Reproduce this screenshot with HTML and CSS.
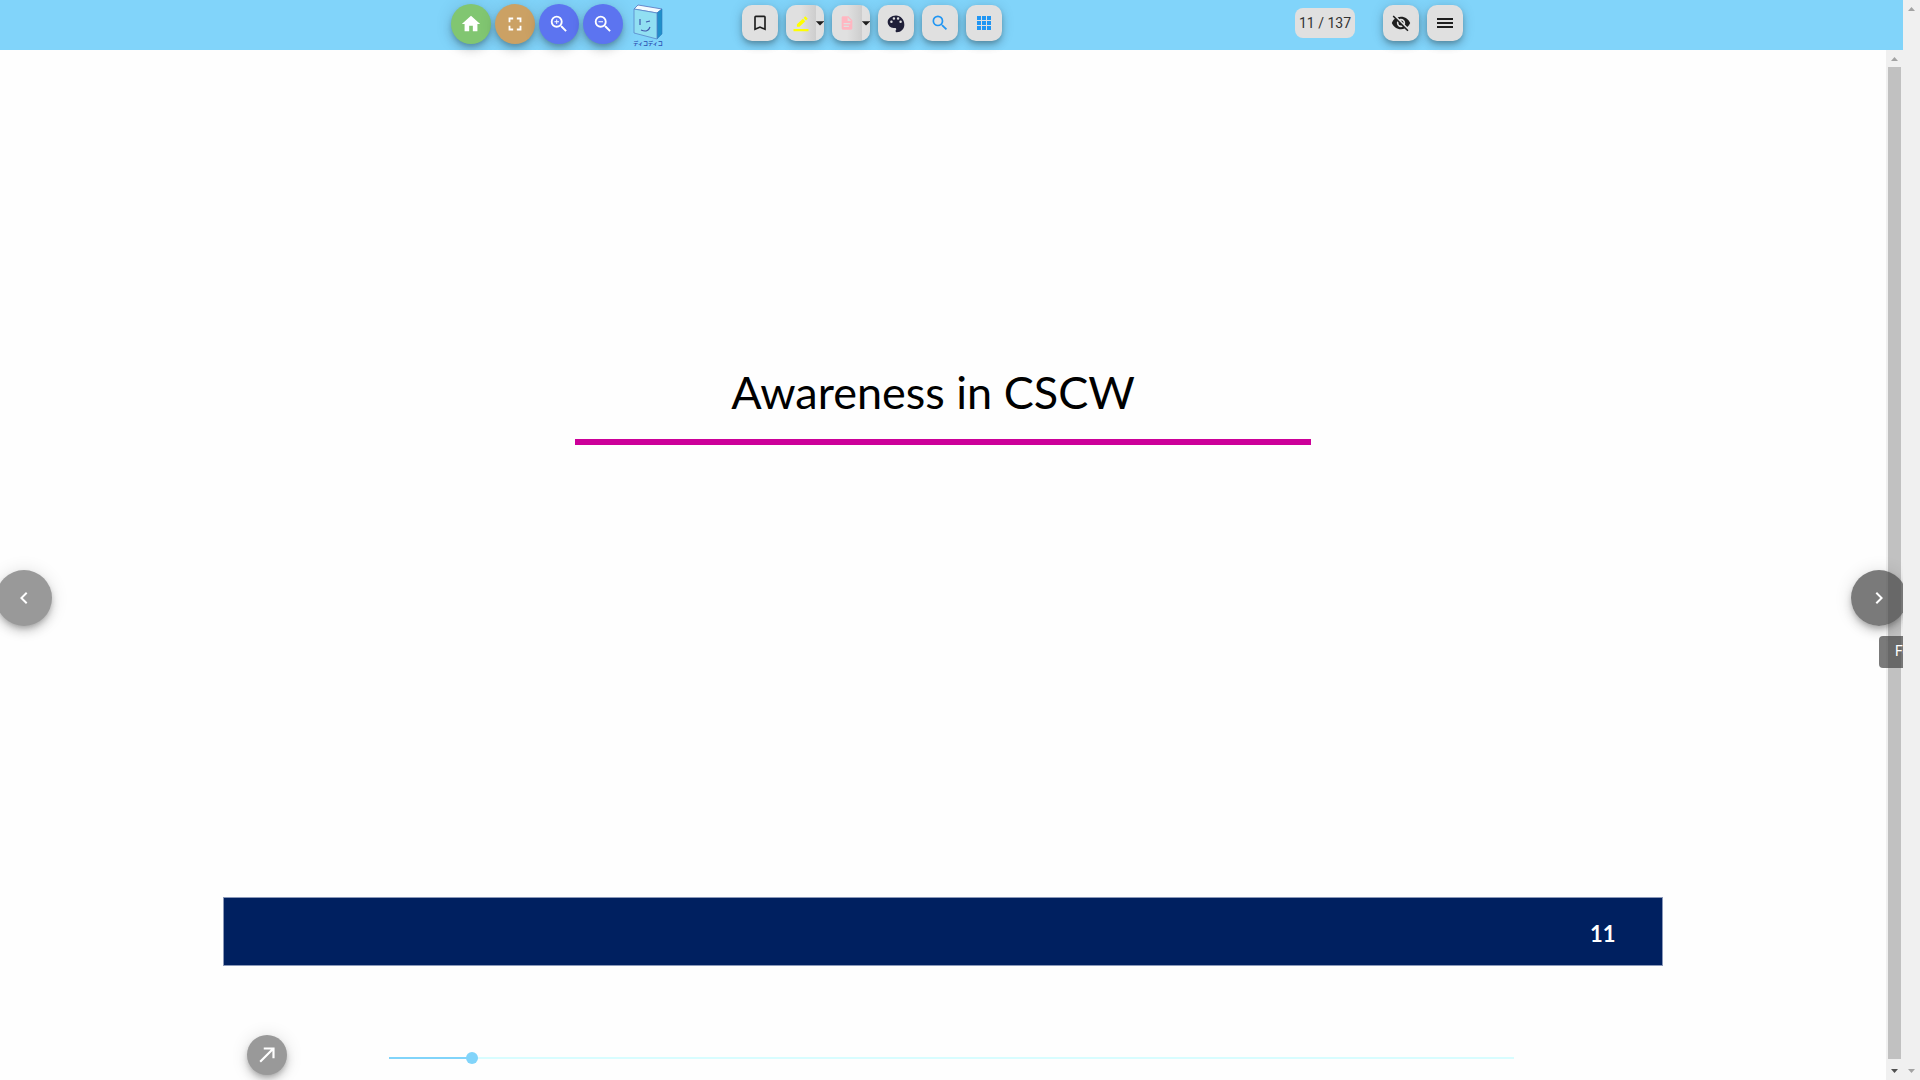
FILE: index.html
```html
<!DOCTYPE html>
<html lang="en">
<head>
<meta charset="utf-8">
<title>Awareness in CSCW</title>
<link rel="stylesheet" href="styles.css">
</head>
<body>
<div class="app">
  <header class="toolbar">
    <nav class="group nav-group">
      <button class="round green" aria-label="Home"><svg viewBox="0 0 24 24"><path d="M10 20v-6h4v6h5v-8h3L12 3 2 12h3v8z"/></svg></button>
      <button class="round tan" aria-label="Full screen"><svg viewBox="0 0 24 24"><path d="M5 5h5v2H7v3H5V5m9 0h5v5h-2V7h-3V5m3 9h2v5h-5v-2h3v-3m-7 3v2H5v-5h2v3h3z"/></svg></button>
      <button class="round indigo" aria-label="Zoom in"><svg viewBox="0 0 24 24"><path d="M15.5 14h-.79l-.28-.27A6.47 6.47 0 0 0 16 9.5 6.5 6.5 0 1 0 9.5 16c1.61 0 3.09-.59 4.23-1.57l.27.28v.79l5 4.99L20.49 19l-4.99-5m-6 0C7.01 14 5 11.99 5 9.5S7.01 5 9.5 5 14 7.01 14 9.5 11.99 14 9.5 14m.5-7H9v2H7v1h2v2h1v-2h2V9h-2V7z"/></svg></button>
      <button class="round indigo" aria-label="Zoom out"><svg viewBox="0 0 24 24"><path d="M15.5 14h-.79l-.28-.27A6.47 6.47 0 0 0 16 9.5 6.5 6.5 0 1 0 9.5 16c1.61 0 3.09-.59 4.23-1.57l.27.28v.79l5 4.99L20.49 19l-4.99-5m-6 0C7.01 14 5 11.99 5 9.5S7.01 5 9.5 5 14 7.01 14 9.5 11.99 14 9.5 14M7 9h5v1H7z"/></svg></button>
      <a class="logo" href="#">
        <svg class="logo-book" viewBox="0 0 32 36">
          <path d="M6 1 30 5 25 9 2 5z" fill="#f4fbff" stroke="#5570bd" stroke-width=".8"/>
          <path d="M25 9 30 5V30L25 35z" fill="#208fc9" stroke="#317bbd" stroke-width=".6"/>
          <path d="M2 5 25 9V35L2 29z" fill="#91dff2" stroke="#5987c9" stroke-width=".8"/>
          <path d="M8 15v6M14 18l4-1M9 26q7 3 9-3" fill="none" stroke="#4059ac" stroke-width="1.2"/>
        </svg>
        <span class="logo-name" lang="ja">ディコディコ</span>
      </a>
    </nav>
    <div class="group tool-group">
      <button class="tile" aria-label="Bookmark"><svg viewBox="0 0 24 24"><path d="M17 18l-5-2.180L7 18V5h10m0-2H7a2 2 0 0 0-2 2v16l7-3 7 3V5a2 2 0 0 0-2-2z"/></svg></button>
      <div class="split yellow">
        <button class="split-main" aria-label="Marker"><svg viewBox="0 0 24 24"><path d="M17.750 3 21 6.250 18.700 8.550 15.450 5.300zM14.400 6.300 17.700 9.600 10 17H6.500v-3.500zM2 20h20v3H2z"/></svg></button>
        <button class="split-more" aria-label="Marker options"><svg viewBox="0 0 24 24"><path d="M7 10l5 5 5-5z"/></svg></button>
      </div>
      <div class="split pink">
        <button class="split-main" aria-label="Note"><svg viewBox="0 0 24 24"><path d="M13 9h5.500L13 3.500V9M6 2h8l6 6v12a2 2 0 0 1-2 2H6a2 2 0 0 1-2-2V4c0-1.110.89-2 2-2m9 16v-2H7v2h8m2-4v-2H7v2h10z"/></svg></button>
        <button class="split-more" aria-label="Note options"><svg viewBox="0 0 24 24"><path d="M7 10l5 5 5-5z"/></svg></button>
      </div>
      <button class="tile palette" aria-label="Colours"><svg viewBox="0 0 24 24"><path d="M17.500 12a1.500 1.500 0 0 1 0-3 1.500 1.500 0 0 1 0 3m-3-4a1.500 1.500 0 0 1 0-3 1.500 1.500 0 0 1 0 3m-5 0a1.500 1.500 0 0 1 0-3 1.500 1.500 0 0 1 0 3m-3 4a1.500 1.500 0 0 1 0-3 1.500 1.500 0 0 1 0 3M12 3C6.500 3 2 6.580 2 11a7 7 0 0 0 7 7h1.800c.8 0 1.500.7 1.500 1.500 0 .4-.2.700-.4 1-.2.200-.4.600-.4 1 0 .8.700 1.500 1.500 1.500 5 0 9-4 9-9 0-6-4.500-11-10-11z"/></svg></button>
      <button class="tile blue" aria-label="Search"><svg viewBox="0 0 24 24"><path d="M9.500 3A6.500 6.500 0 0 1 16 9.500c0 1.610-.59 3.090-1.560 4.230l.27.270h.79l5 5-1.500 1.500-5-5v-.79l-.27-.27A6.516 6.516 0 0 1 9.500 16a6.500 6.500 0 0 1 0-13m0 2C7 5 5 7 5 9.500S7 14 9.500 14 14 12 14 9.500 12 5 9.500 5z"/></svg></button>
      <button class="tile blue" aria-label="Thumbnails"><svg viewBox="0 0 20 20"><path d="M3 3h4v4H3zM8 3h4v4H8zM13 3h4v4h-4zM3 8h4v4H3zM8 8h4v4H8zM13 8h4v4h-4zM3 13h4v4H3zM8 13h4v4H8zM13 13h4v4h-4z"/></svg></button>
    </div>
    <div class="group page-group">
      <span class="counter">11 / 137</span>
      <button class="tile" aria-label="Hide"><svg viewBox="0 0 24 24"><path d="M11.830 9 15 12.160V12a3 3 0 0 0-3-3h-.17m-4.300.8 1.550 1.550c-.05.210-.08.420-.08.650a3 3 0 0 0 3 3c.22 0 .44-.03.650-.08l1.550 1.550c-.67.330-1.410.530-2.200.530a5 5 0 0 1-5-5c0-.79.200-1.530.530-2.200M2 4.270l2.280 2.280.45.450C3.080 8.300 1.780 10 1 12c1.730 4.390 6 7.500 11 7.500 1.550 0 3.030-.3 4.380-.84l.43.420L19.730 22 21 20.730 3.270 3M12 7a5 5 0 0 1 5 5c0 .64-.13 1.260-.36 1.820l2.930 2.930c1.500-1.250 2.700-2.890 3.430-4.750-1.730-4.390-6-7.500-11-7.500-1.400 0-2.740.25-4 .7l2.170 2.150C10.740 7.130 11.350 7 12 7z"/></svg></button>
      <button class="tile" aria-label="Menu"><svg viewBox="0 0 20 20"><path d="M2 5h16v2H2zM2 9h16v2H2zM2 13h16v2H2z"/></svg></button>
    </div>
  </header>
  <div class="viewer">
    <main class="page">
      <article class="slide">
        <h1 class="slide-title">Awareness in CSCW</h1>
        <hr class="slide-rule">
        <footer class="slide-band">11</footer>
      </article>
      <div class="controls">
        <button class="round grey" aria-label="Open"><svg class="large" viewBox="0 0 24 24"><path d="M5 17.590 15.590 7H9V5h10v10h-2V8.410L6.410 19z"/></svg></button>
        <input class="slider" type="range" min="1" max="137" value="11" aria-label="Page">
      </div>
    </main>
    <div class="scrollbar"><i class="arrow up"></i><i class="thumb"></i><i class="arrow down dark"></i></div>
  </div>
  <button class="turn prev" aria-label="Back"><svg viewBox="0 0 24 24"><path d="M15.410 16.580 10.830 12l4.580-4.590L14 6l-6 6 6 6z"/></svg></button>
  <button class="turn next" aria-label="Forward"><svg viewBox="0 0 24 24"><path d="M8.590 16.580 13.170 12 8.590 7.410 10 6l6 6-6 6z"/></svg></button>
  <div class="tooltip">Forward</div>
</div>
<div class="scrollbar"><i class="arrow up"></i><i class="arrow down"></i></div>
</body>
</html>
```
FILE: styles.css
```css
* { box-sizing: border-box; }

body {
  margin: 0;
  height: 100vh;
  display: flex;
  background: #fefefe;
  font-family: Roboto, "Liberation Sans", sans-serif;
}

button {
  border: 0;
  padding: 0;
  display: flex;
  align-items: center;
  justify-content: center;
  flex: none;
  color: #1e1e1e;
  background: #e0e0e0;
}

svg { width: 20px; height: 20px; fill: currentColor; flex: none; }

.app {
  flex: 1;
  min-width: 0;
  position: relative;
  overflow: hidden;
  display: flex;
  flex-direction: column;
}

/* Toolbar */
.toolbar {
  height: 50px;
  flex: none;
  display: grid;
  grid-template-columns: 451fr 291fr 553fr 608fr;
  background: #81d4fa;
}

.group { display: flex; align-items: flex-start; }
.nav-group { grid-column: 2; gap: 4px; padding-top: 4px; }
.tool-group { gap: 8px; padding-top: 5px; }
.page-group { gap: 8px; padding-top: 5px; }

.round {
  width: 40px;
  height: 40px;
  border-radius: 50%;
  color: #fff;
  box-shadow: 0 3px 5px -1px rgba(0, 0, 0, .2), 0 6px 10px rgba(0, 0, 0, .14), 0 1px 18px rgba(0, 0, 0, .12);
}
.round svg { width: 22px; height: 22px; }
.round .large { width: 26px; height: 26px; }
.green { background: #81c671; }
.tan { background: #cba164; }
.indigo { background: #5c74f0; }
.grey { background: #999; }

.logo {
  width: 34px;
  margin-left: 4px;
  display: flex;
  flex-direction: column;
  align-items: center;
  text-decoration: none;
}
.logo-book { width: 32px; height: 36px; }
.logo-name {
  font: bold 5px/6px "Noto Sans CJK JP", sans-serif;
  color: #2a4db0;
  white-space: nowrap;
}

.tile, .split {
  height: 36px;
  border-radius: 10px;
  box-shadow: 0 3px 5px -1px rgba(0, 0, 0, .2), 0 5px 8px rgba(0, 0, 0, .14), 0 1px 14px rgba(0, 0, 0, .12);
}
.tile { width: 36px; }
.split { width: 38px; display: flex; overflow: hidden; }
.split-main { width: 30px; height: 36px; background: linear-gradient(90deg, #e0e0e0 50%, #cdcdcd); }
.split-more { width: 8px; height: 36px; }
.yellow .split-main { color: #ff0; }
.yellow .split-main svg { width: 18px; height: 18px; }
.pink .split-main { color: #ffb6c1; }
.pink .split-main svg { width: 16px; height: 16px; }
.palette { color: #1f1f38; }
.blue { color: #2196f3; }

.counter {
  width: 60px;
  height: 30px;
  margin: 3px 20px 0 0;
  border-radius: 8px;
  background: #e0e0e0;
  color: #333;
  font-size: 14px;
  line-height: 30px;
  text-align: center;
}

/* Page */
.viewer { flex: 1; min-height: 0; display: flex; }
.page { flex: 1; min-width: 0; display: flex; flex-direction: column; }

.slide {
  width: 76.3%;
  height: 810px;
  flex: none;
  margin: 106px auto 0;
  display: flex;
  flex-direction: column;
  align-items: center;
}
.slide-title {
  margin: 208px 0 0;
  padding-right: 20px;
  font: 400 45px/56px Lato, sans-serif;
  color: #000;
}
.slide-rule {
  width: 51.1%;
  height: 6px;
  margin: 19px 0 0;
  border: 0;
  background: #cc0099;
}
.slide-band {
  width: 100%;
  height: 69px;
  margin-top: auto;
  padding-right: 46px;
  border: 1px solid #8b99b9;
  background: #002060;
  color: #fff;
  font: 700 22px/71px Lato, sans-serif;
  text-align: right;
}

.controls {
  display: flex;
  align-items: center;
  padding: 69px 19.4% 0 13.1%;
}
.slider {
  appearance: none;
  flex: 1;
  height: 12px;
  margin: 6px 0 0 96px;
  background:
    linear-gradient(90deg, #81d4fa 7.35%, #d8fdff 7.35%) center / calc(100% - 12px) 2px no-repeat;
}
.slider::-webkit-slider-thumb {
  appearance: none;
  width: 12px;
  height: 12px;
  border-radius: 50%;
  background: #81d4fa;
}

/* Page turning buttons float over the page edges */
.turn {
  position: absolute;
  top: 570px;
  width: 56px;
  height: 56px;
  border-radius: 50%;
  color: #fff;
  box-shadow: 0 3px 5px -1px rgba(0, 0, 0, .2), 0 6px 10px rgba(0, 0, 0, .14), 0 1px 18px rgba(0, 0, 0, .12);
}
.turn svg { width: 24px; height: 24px; }
.prev { left: -4px; background: #999; }
.next { right: -4px; background: rgba(66, 66, 66, .7); }
.tooltip {
  position: absolute;
  top: 636px;
  left: calc(100% - 24px);
  height: 32px;
  padding: 0 16px;
  border-radius: 4px;
  background: rgba(66, 66, 66, .7);
  color: #fff;
  font-size: 14px;
  line-height: 31px;
}

/* Scrollbars */
.scrollbar {
  width: 17px;
  flex: none;
  display: flex;
  flex-direction: column;
  align-items: center;
  justify-content: space-between;
  padding: 7px 0;
  background: #f0f0f0;
}
.thumb { flex: 1; width: 13px; margin: 6px 0 10px; background: #c1c1c1; }
.arrow { width: 7px; height: 4px; background: #a3a3a3; }
.up { clip-path: polygon(50% 0, 100% 100%, 0 100%); }
.down { clip-path: polygon(0 0, 100% 0, 50% 100%); }
.dark { background: #505050; }
```
